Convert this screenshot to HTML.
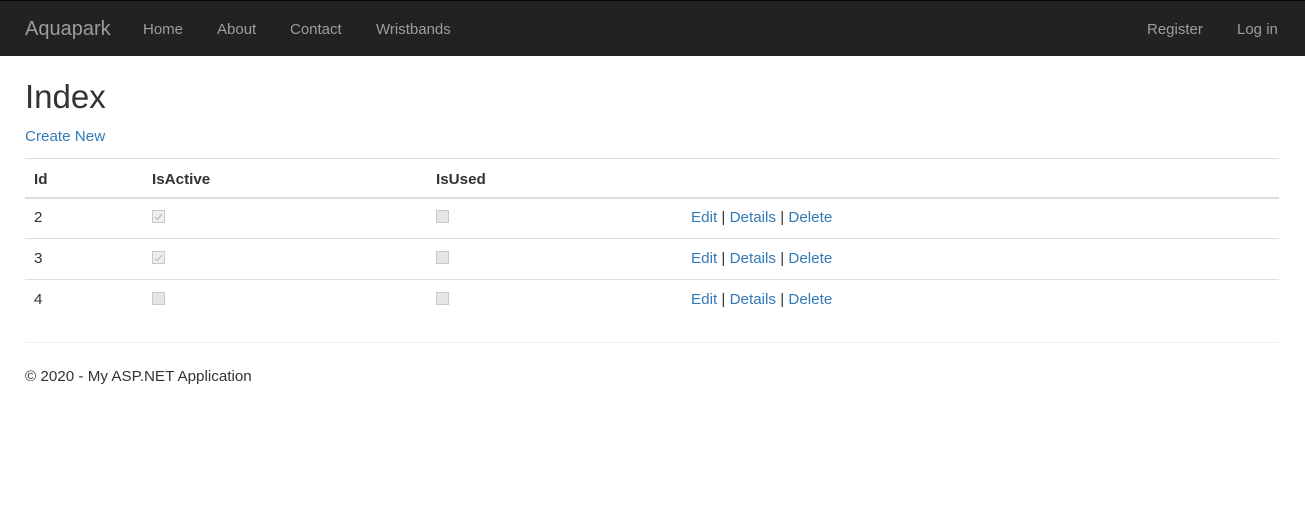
<!DOCTYPE html>
<html><head><style>
body{margin:0;font-family:"Liberation Sans",sans-serif;font-size:15px;color:#333;background:#fff}
.nav{height:56px;background:#222;border-top:1px solid #080808;box-sizing:border-box;position:relative}
.nav a{position:absolute;top:20px;color:#9d9d9d;text-decoration:none;font-size:15px}
.brand{font-size:20px!important;top:17px!important}
a{color:#337ab7;text-decoration:none}
h1{position:absolute;left:25px;top:78px;margin:0;font-size:33px;font-weight:400;color:#333}
.cn{position:absolute;left:25px;top:128px;font-size:15.2px}
.hr{position:absolute;left:25px;width:1254px;height:1px;background:#ddd}
.t{position:absolute;font-size:15.2px}
.cb{position:absolute;width:11px;height:11px;border:1px solid #c8c8c8;background:#e6e6e6}
.ck{background:#eee}
</style></head><body>
<div class="nav">
<a class="brand" style="left:25px">Aquapark</a>
<a style="left:143px">Home</a><a style="left:217px">About</a><a style="left:290px">Contact</a><a style="left:376px">Wristbands</a>
<a style="left:1147px">Register</a><a style="left:1237px">Log in</a>
</div>
<h1>Index</h1>
<a class="cn">Create New</a>
<div class="hr" style="top:158px"></div>
<div class="t" style="left:34px;top:171px;font-weight:bold">Id</div>
<div class="t" style="left:152px;top:171px;font-weight:bold">IsActive</div>
<div class="t" style="left:436px;top:171px;font-weight:bold">IsUsed</div>
<div class="hr" style="top:197px;height:2px"></div>
<div class="t" style="left:34px;top:209px">2</div>
<div class="t" style="left:34px;top:250px">3</div>
<div class="t" style="left:34px;top:291px">4</div>
<div class="hr" style="top:238px"></div>
<div class="hr" style="top:279px"></div>
<div class="cb ck" style="left:152px;top:210px"><svg width="11" height="11" style="position:absolute;left:0;top:0"><path d="M2 6l2.5 2.5L9 3" stroke="#bbb" fill="none" stroke-width="1.2"/></svg></div>
<div class="cb ck" style="left:152px;top:251px"><svg width="11" height="11" style="position:absolute;left:0;top:0"><path d="M2 6l2.5 2.5L9 3" stroke="#bbb" fill="none" stroke-width="1.2"/></svg></div>
<div class="cb" style="left:152px;top:292px"></div>
<div class="cb" style="left:436px;top:210px"></div>
<div class="cb" style="left:436px;top:251px"></div>
<div class="cb" style="left:436px;top:292px"></div>
<div class="t" style="left:691px;top:209px"><a>Edit</a> | <a>Details</a> | <a>Delete</a></div>
<div class="t" style="left:691px;top:250px"><a>Edit</a> | <a>Details</a> | <a>Delete</a></div>
<div class="t" style="left:691px;top:291px"><a>Edit</a> | <a>Details</a> | <a>Delete</a></div>
<div class="hr" style="top:342px;background:#eee"></div>
<div class="t" style="left:25px;top:368px">© 2020 - My ASP.NET Application</div>
</body></html>
